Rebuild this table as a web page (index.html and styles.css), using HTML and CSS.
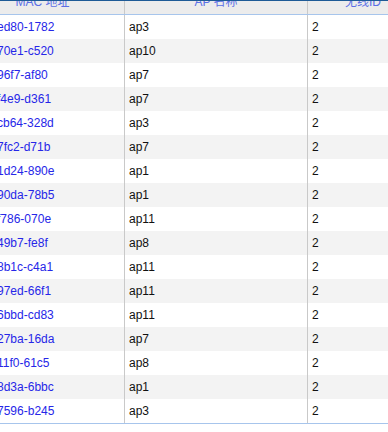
FILE: index.html
```html
<!DOCTYPE html>
<html lang="zh">
<head>
<meta charset="utf-8">
<link rel="stylesheet" href="styles.css">
</head>
<body>
<div class="viewport">
  <div class="grid">
    <div class="row head">
      <div class="cell c1">MAC 地址</div>
      <div class="cell c2">AP 名称</div>
      <div class="cell c3">无线ID</div>
    </div>
    <div class="row"><div class="cell c1 mac">0c45-ed80-1782</div><div class="cell c2">ap3</div><div class="cell c3">2</div></div>
    <div class="row"><div class="cell c1 mac">0c45-70e1-c520</div><div class="cell c2">ap10</div><div class="cell c3">2</div></div>
    <div class="row"><div class="cell c1 mac">0c45-96f7-af80</div><div class="cell c2">ap7</div><div class="cell c3">2</div></div>
    <div class="row"><div class="cell c1 mac">0c45-f4e9-d361</div><div class="cell c2">ap7</div><div class="cell c3">2</div></div>
    <div class="row"><div class="cell c1 mac">0c45-cb64-328d</div><div class="cell c2">ap3</div><div class="cell c3">2</div></div>
    <div class="row"><div class="cell c1 mac">0c45-7fc2-d71b</div><div class="cell c2">ap7</div><div class="cell c3">2</div></div>
    <div class="row"><div class="cell c1 mac">0c45-1d24-890e</div><div class="cell c2">ap1</div><div class="cell c3">2</div></div>
    <div class="row"><div class="cell c1 mac">0c45-90da-78b5</div><div class="cell c2">ap1</div><div class="cell c3">2</div></div>
    <div class="row"><div class="cell c1 mac">0c45-f786-070e</div><div class="cell c2">ap11</div><div class="cell c3">2</div></div>
    <div class="row"><div class="cell c1 mac">0c45-49b7-fe8f</div><div class="cell c2">ap8</div><div class="cell c3">2</div></div>
    <div class="row"><div class="cell c1 mac">0c45-8b1c-c4a1</div><div class="cell c2">ap11</div><div class="cell c3">2</div></div>
    <div class="row"><div class="cell c1 mac">0c45-97ed-66f1</div><div class="cell c2">ap11</div><div class="cell c3">2</div></div>
    <div class="row"><div class="cell c1 mac">0c45-6bbd-cd83</div><div class="cell c2">ap11</div><div class="cell c3">2</div></div>
    <div class="row"><div class="cell c1 mac">0c45-27ba-16da</div><div class="cell c2">ap7</div><div class="cell c3">2</div></div>
    <div class="row"><div class="cell c1 mac">0c45-11f0-61c5</div><div class="cell c2">ap8</div><div class="cell c3">2</div></div>
    <div class="row"><div class="cell c1 mac">0c45-8d3a-6bbc</div><div class="cell c2">ap1</div><div class="cell c3">2</div></div>
    <div class="row last"><div class="cell c1 mac">0c45-7596-b245</div><div class="cell c2">ap3</div><div class="cell c3">2</div></div>
  </div>
</div>
</body>
</html>
```

FILE: styles.css
```css
html, body {
  margin: 0;
  padding: 0;
  background: #ffffff;
}
body {
  font-family: "Liberation Sans", Arial, "Noto Sans CJK SC", sans-serif;
  font-size: 12px;
  color: #111111;
}
.viewport {
  width: 388px;
  height: 431px;
  overflow: hidden;
  border-top: 1px solid #1e5a96;
}
.grid {
  margin-top: -10px;
  margin-left: -39px;
  width: 457px;
}
.row {
  display: grid;
  grid-template-columns: 164px 183px 110px;
  height: 24px;
  background: #ffffff;
}
.row:nth-child(odd) {
  background: #f3f3f3;
}
.row.head {
  height: 23px;
  background: #ececec;
  border-bottom: 1px solid #a7c5ec;
}
.row.last {
  border-bottom: 1px solid #a7c5ec;
}
.cell {
  line-height: 24px;
  padding: 0 4px;
  white-space: nowrap;
  overflow: hidden;
}
.c1, .c2 {
  border-right: 1px solid #c9c9c9;
}
.head .cell {
  line-height: 23px;
  text-align: center;
  color: #5b6fe6;
}
.mac {
  padding-left: 6px;
  color: #2626e8;
}
```
